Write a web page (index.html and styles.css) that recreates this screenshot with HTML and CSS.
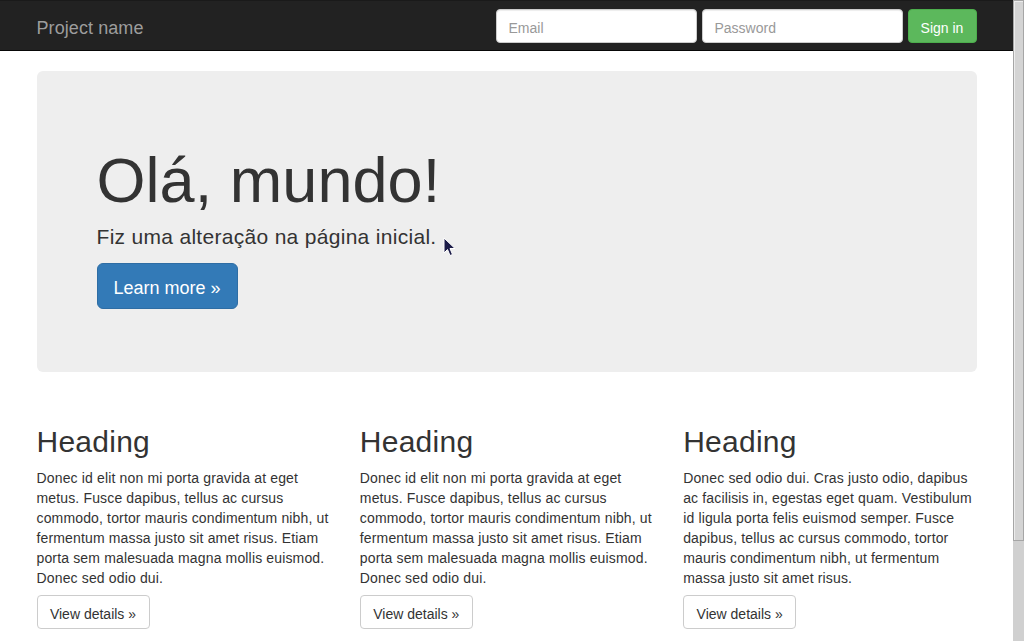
FILE: index.html
```html
<!DOCTYPE html>
<html lang="pt">
<head>
<meta charset="utf-8">
<title>Jumbotron</title>
<link rel="stylesheet" href="styles.css">
</head>
<body>
<div class="page">
  <nav class="navbar">
    <div class="container nav-inner">
      <a class="brand" href="#">Project name</a>
      <form class="nav-form">
        <input class="form-control" type="text" placeholder="Email">
        <input class="form-control" type="password" placeholder="Password">
        <button type="button" class="btn btn-success">Sign in</button>
      </form>
    </div>
  </nav>

  <main class="container main">
    <section class="jumbotron">
      <h1 class="jumbo-title">Olá, mundo!</h1>
      <p class="lead">Fiz uma alteração na página inicial.</p>
      <p class="jumbo-actions"><a class="btn btn-primary btn-lg" href="#">Learn more &raquo;</a></p>
      <svg class="cursor" width="13" height="20" viewBox="0 0 13 20"><path d="M1 1 L1 16 L4.5 12.5 L7 18.5 L9.5 17.5 L7 11.5 L12 11.5 Z" fill="#1c1c48" stroke="#ffffff" stroke-width="1"/></svg>
    </section>

    <div class="row">
      <div class="col">
        <h2 class="col-title">Heading</h2>
        <p class="col-text">Donec id elit non mi porta gravida at eget metus. Fusce dapibus, tellus ac cursus commodo, tortor mauris condimentum nibh, ut fermentum massa justo sit amet risus. Etiam porta sem malesuada magna mollis euismod. Donec sed odio dui.</p>
        <p class="col-action"><a class="btn btn-default" href="#">View details &raquo;</a></p>
      </div>
      <div class="col">
        <h2 class="col-title">Heading</h2>
        <p class="col-text">Donec id elit non mi porta gravida at eget metus. Fusce dapibus, tellus ac cursus commodo, tortor mauris condimentum nibh, ut fermentum massa justo sit amet risus. Etiam porta sem malesuada magna mollis euismod. Donec sed odio dui.</p>
        <p class="col-action"><a class="btn btn-default" href="#">View details &raquo;</a></p>
      </div>
      <div class="col">
        <h2 class="col-title">Heading</h2>
        <p class="col-text">Donec sed odio dui. Cras justo odio, dapibus ac facilisis in, egestas eget quam. Vestibulum id ligula porta felis euismod semper. Fusce dapibus, tellus ac cursus commodo, tortor mauris condimentum nibh, ut fermentum massa justo sit amet risus.</p>
        <p class="col-action"><a class="btn btn-default" href="#">View details &raquo;</a></p>
      </div>
    </div>
  </main>
</div>
<div class="scrollbar"><div class="thumb"></div></div>
</body>
</html>
```

FILE: styles.css
```css
* { box-sizing: border-box; }
html, body { margin: 0; padding: 0; height: 100%; overflow: hidden; }
body {
  font-family: "Liberation Sans", Arial, sans-serif;
  font-size: 14px;
  line-height: 1.42857;
  color: #333;
  background: #fff;
}
.page { width: calc(100% - 11px); }
.container { width: 970px; margin: 0 auto; padding: 0 15px; }

.navbar {
  background: #222;
  border-top: 1px solid #1a1a1a;
  border-bottom: 1px solid #080808;
  height: 51px;
}
.nav-inner { display: flex; justify-content: space-between; align-items: flex-start; height: 49px; }
.brand {
  display: block;
  margin-left: -15px;
  padding: 17px 15px 12px;
  font-size: 18px;
  line-height: 20px;
  letter-spacing: 0.08px;
  color: #9d9d9d;
  text-decoration: none;
}
.nav-form { display: flex; gap: 5px; margin: 8px 0 0; }
.form-control {
  width: 201px;
  height: 34px;
  padding: 8px 12px 4px;
  font-family: inherit;
  font-size: 14px;
  color: #555;
  background: #fff;
  border: 1px solid #ccc;
  border-radius: 4px;
  box-shadow: inset 0 1px 1px rgba(0,0,0,.075);
  outline: none;
}
.form-control::placeholder { color: #999; }

.btn {
  display: inline-block;
  padding: 8px 12px 4px;
  font-family: inherit;
  font-size: 14px;
  line-height: 20px;
  border: 1px solid transparent;
  border-radius: 4px;
  text-decoration: none;
  cursor: pointer;
}
.btn-success { background: #5cb85c; border-color: #4cae4c; color: #fff; height: 34px; width: 69px; padding: 8px 0 4px; text-align: center; }
.btn-primary { background: #337ab7; border-color: #2e6da4; color: #fff; }
.btn-lg { padding: 12px 16px 8px; font-size: 18px; line-height: 24px; border-radius: 6px; }
.btn-default { background: #fff; border-color: #ccc; color: #333; width: 113px; padding-left: 0; padding-right: 0; text-align: center; }

.main { padding-top: 20px; }
.jumbotron {
  position: relative;
  background: #eee;
  border-radius: 6px;
  padding: 48px 60px;
  height: 301px;
  margin-bottom: 30px;
}
.jumbo-title {
  margin: 27px 0 3px;
  font-size: 63px;
  line-height: 1.1;
  font-weight: 500;
  color: #333;
  letter-spacing: 0.05px;
}
.lead { margin: 0 0 11px; padding-top: 4px; font-size: 21px; line-height: 30px; letter-spacing: 0.3px; }
.jumbo-actions { margin: 0; }
.cursor { position: absolute; left: 406px; top: 166px; }

.row { display: grid; grid-template-columns: repeat(3, 1fr); margin: 0 -15px; }
.col { padding: 0 15px; }
.col-title { margin: 23px 0 6px; font-size: 30px; line-height: 33px; font-weight: 500; letter-spacing: 0.25px; }
.col-text { margin: 0 0 6px; padding-top: 5px; letter-spacing: 0.15px; }
.col-action { margin: 0 0 10px; }

.scrollbar {
  position: fixed;
  top: 0;
  right: 0;
  width: 11px;
  height: 100%;
  background: #d0d0d0;
}
.thumb {
  height: 541px;
  background: #d4d4d4;
  border: 1px solid #a6a6a6;
  box-shadow: inset 1px 1px 0 #ececec;
}
```
